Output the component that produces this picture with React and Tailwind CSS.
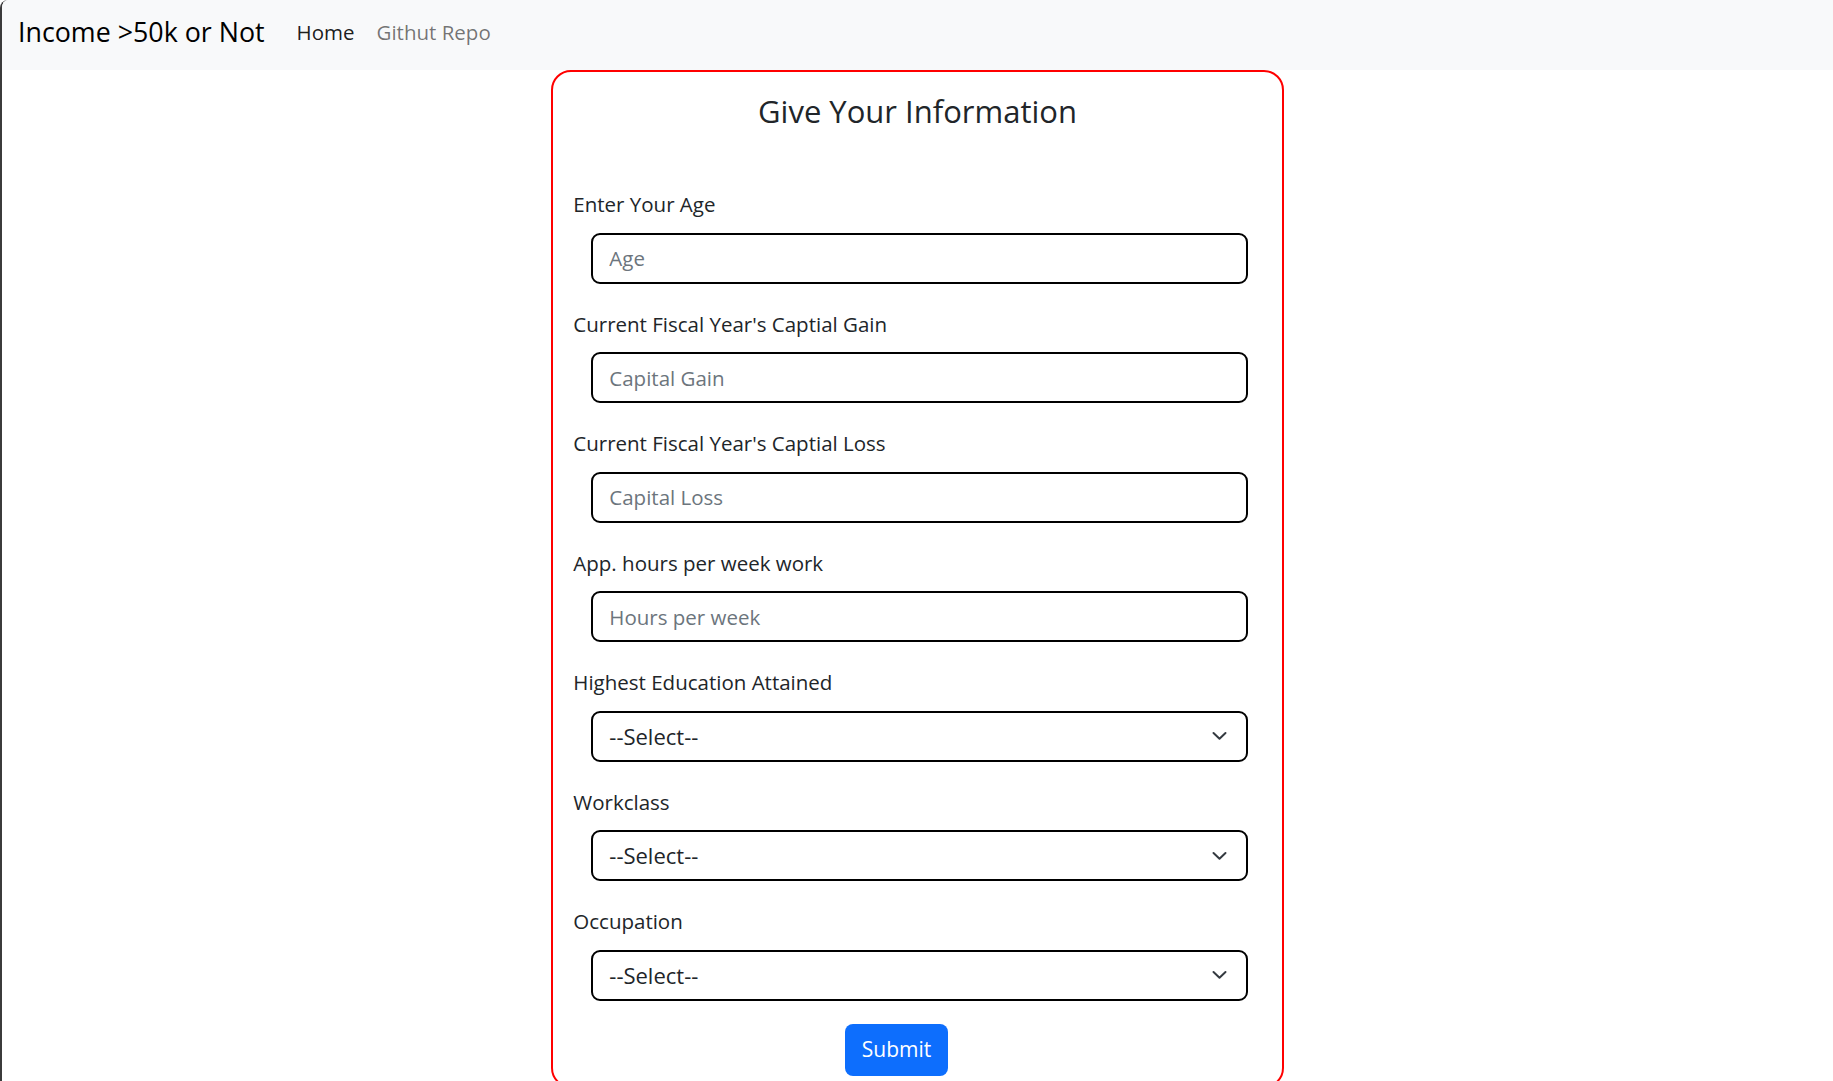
import { useState } from "react";

const font = { fontFamily: '"Open Sans", "Noto Sans", sans-serif' };

const fields = [
  { type: "input", label: "Enter Your Age", placeholder: "Age", name: "age" },
  { type: "input", label: "Current Fiscal Year's Captial Gain", placeholder: "Capital Gain", name: "gain" },
  { type: "input", label: "Current Fiscal Year's Captial Loss", placeholder: "Capital Loss", name: "loss" },
  { type: "input", label: "App. hours per week work", placeholder: "Hours per week", name: "hours" },
  { type: "select", label: "Highest Education Attained", name: "education" },
  { type: "select", label: "Workclass", name: "workclass" },
  { type: "select", label: "Occupation", name: "occupation" },
];

function Chevron() {
  return (
    <svg
      className="pointer-events-none absolute right-[21px] top-1/2 -translate-y-1/2"
      width="15"
      height="9"
      viewBox="0 0 15 9"
      fill="none"
    >
      <path d="M1.5 1.5 L7.5 7.2 L13.5 1.5" stroke="#343a40" strokeWidth="2" strokeLinecap="round" strokeLinejoin="round" />
    </svg>
  );
}

function Field({ field, value, onChange }) {
  return (
    <div className="flex flex-col mb-[25px]">
      <label className="text-[20.5px] leading-[30px] text-[#212529]">{field.label}</label>
      {field.type === "input" ? (
        <input
          type="text"
          value={value}
          onChange={(e) => onChange(field.name, e.target.value)}
          placeholder={field.placeholder}
          className="mt-[13.5px] ml-[18px] mr-[14px] h-[51px] rounded-[9px] border-2 border-black bg-white px-[16px] text-[20.5px] text-[#212529] placeholder:text-[#6c757d] outline-none"
        />
      ) : (
        <div className="relative mt-[13.5px] ml-[18px] mr-[14px]">
          <select
            value={value}
            onChange={(e) => onChange(field.name, e.target.value)}
            className="appearance-none w-full h-[51px] rounded-[9px] border-2 border-black bg-white px-[16px] text-[22px] text-[#212529] outline-none"
          >
            <option value="">--Select--</option>
          </select>
          <Chevron />
        </div>
      )}
    </div>
  );
}

export default function App() {
  const [form, setForm] = useState({});

  function update(name, val) {
    setForm({ ...form, [name]: val });
  }

  return (
    <div style={font} className="min-h-screen bg-white border-l-2 border-[#3b3b3b] rounded-tl-[8px] overflow-hidden">
      {/* NAVBAR */}
      <nav className="h-[70px] bg-[#f8f9fa] flex items-center pl-[16px] pb-[5px]">
        <span className="text-[26.8px] text-black mr-[32px]">Income &gt;50k or Not</span>
        <div className="flex gap-[22px] text-[20.5px]">
          <a className="text-[rgba(0,0,0,0.9)] cursor-pointer">Home</a>
          <a className="text-[rgba(0,0,0,0.55)] cursor-pointer">Githut Repo</a>
        </div>
      </nav>

      {/* CARD */}
      <form
        onSubmit={(e) => e.preventDefault()}
        className="w-[40%] mx-auto border-2 border-[#ff0000] rounded-[20px] px-[20px] pt-[19px] pb-[10px]"
      >
        <h3 className="text-center text-[31px] leading-[40px] text-[#212529] mb-[58px]">Give Your Information</h3>

        {fields.map((f) => (
          <Field key={f.name} field={f} value={form[f.name] || ""} onChange={update} />
        ))}

        <div className="flex justify-center pr-[42px] -mt-[2px]">
          <button
            type="submit"
            className="w-[103px] h-[52px] rounded-[8px] bg-[#0d6efd] text-white text-[21px]"
          >
            Submit
          </button>
        </div>
      </form>
    </div>
  );
}
